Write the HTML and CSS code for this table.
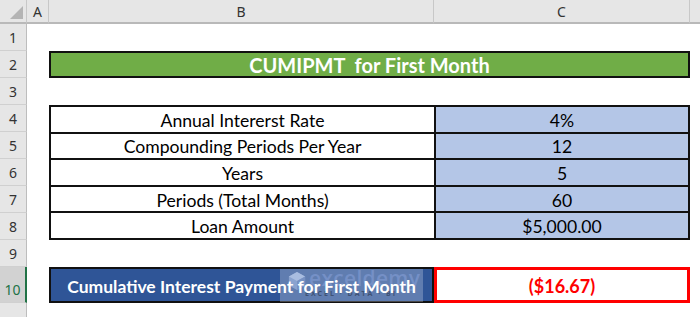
FILE: index.html
```html
<!DOCTYPE html>
<html>
<head>
<meta charset="utf-8">
<link rel="stylesheet" href="styles.css">
</head>
<body>
<div class="sheet">
  <div class="corner"><span class="tri"></span></div>
  <div class="colhead ch-a">A</div>
  <div class="colhead ch-b">B</div>
  <div class="colhead ch-c">C</div>
  <div class="colhead ch-x"></div>

  <div class="rowhead r1">1</div>
  <div class="rowhead r2">2</div>
  <div class="rowhead r3">3</div>
  <div class="rowhead r4">4</div>
  <div class="rowhead r5">5</div>
  <div class="rowhead r6">6</div>
  <div class="rowhead r7">7</div>
  <div class="rowhead r8">8</div>
  <div class="rowhead r9">9</div>
  <div class="rowhead r10 sel">10</div>
  <div class="rowhead r11"></div>

  <div class="title">CUMIPMT&nbsp; for First Month</div>

  <div class="data">
    <div class="lbl">Annual Interers​t Rate</div><div class="val">4%</div>
    <div class="lbl">Compounding Periods Per Year</div><div class="val">12</div>
    <div class="lbl">Years</div><div class="val">5</div>
    <div class="lbl">Periods (Total Months)</div><div class="val">60</div>
    <div class="lbl">Loan Amount</div><div class="val">$5,000.00</div>
  </div>

  <div class="result-lbl">
    <span class="txt">Cumulative Interest Payment for First Month</span>
    <div class="watermark">
      <svg class="wm-logo" viewBox="0 0 20 22" width="18" height="20">
        <polygon points="10,1 19,6 19,16 10,21 1,16 1,6" fill="#8aa3cf"/>
        <polygon points="10,1 19,6 10,11 1,6" fill="#a9bde0"/>
        <polygon points="10,11 19,6 19,16 10,21" fill="#7791c2"/>
      </svg>
      <div class="wm-text">
        <span class="wm-name">exceldemy</span>
        <span class="wm-sub">EXCEL · DATA · BI</span>
      </div>
    </div>
  </div>
  <div class="result-val">($16.67)</div>
</div>
</body>
</html>
```

FILE: styles.css
```css
html, body {
  margin: 0;
  padding: 0;
  background: #ffffff;
}
.sheet {
  width: 700px;
  height: 317px;
  display: grid;
  grid-template-columns: 27px 22px 385px 256px 1fr;
  grid-template-rows: 24px repeat(9, 27px) 36px 1fr;
  font-family: Lato, "Open Sans", sans-serif;
  overflow: hidden;
}
.corner {
  grid-column: 1;
  grid-row: 1;
  background: #e6e6e6;
  border-bottom: 2px solid #b9b9b9;
  border-right: 1px solid #c8c8c8;
  box-sizing: border-box;
  position: relative;
}
.tri {
  position: absolute;
  right: 3px;
  bottom: 3px;
  width: 0;
  height: 0;
  border-left: 13px solid transparent;
  border-bottom: 13px solid #b4b4b4;
}
.colhead {
  grid-row: 1;
  background: #e6e6e6;
  border-bottom: 2px solid #b9b9b9;
  border-right: 1px solid #c8c8c8;
  box-sizing: border-box;
  display: flex;
  align-items: center;
  justify-content: center;
  font-family: "Noto Sans", "Open Sans", sans-serif;
  font-size: 14px;
  color: #333;
  padding-top: 1px;
}
.ch-a { grid-column: 2; }
.ch-b { grid-column: 3; }
.ch-c { grid-column: 4; }
.ch-x { grid-column: 5; border-right: none; }

.rowhead {
  grid-column: 1;
  background: #e6e6e6;
  border-bottom: 1px solid #d0d0d0;
  border-right: 1px solid #bdbdbd;
  box-sizing: border-box;
  display: flex;
  align-items: flex-end;
  justify-content: center;
  padding-bottom: 3px;
  font-family: "Noto Sans", "Open Sans", sans-serif;
  font-size: 14px;
  color: #333;
}
.r1 { grid-row: 2; }
.r2 { grid-row: 3; }
.r3 { grid-row: 4; }
.r4 { grid-row: 5; }
.r5 { grid-row: 6; }
.r6 { grid-row: 7; }
.r7 { grid-row: 8; }
.r8 { grid-row: 9; }
.r9 { grid-row: 10; }
.r10 { grid-row: 11; }
.r11 { grid-row: 12; border-bottom: none; }
.rowhead.sel {
  background: #d2d2d2;
  color: #217346;
  border-right: 2px solid #217346;
}

.title {
  grid-column: 3 / 5;
  grid-row: 3;
  background: #70ad47;
  border: 2px solid #111;
  box-sizing: border-box;
  color: #ffffff;
  font-weight: bold;
  font-size: 20px;
  display: flex;
  align-items: center;
  justify-content: center;
  white-space: pre;
  padding-top: 1px;
}

.data {
  grid-column: 3 / 5;
  grid-row: 5 / 10;
  display: grid;
  grid-template-columns: 385px 1fr;
  grid-template-rows: repeat(5, 1fr);
  border-right: 2px solid #111;
  border-bottom: 2px solid #111;
  box-sizing: border-box;
  font-size: 17.6px;
  color: #000;
}
.lbl, .val {
  border-top: 2px solid #111;
  border-left: 2px solid #111;
  display: flex;
  align-items: center;
  justify-content: center;
  padding-top: 2px;
}
.val {
  background: #b4c6e7;
}

.result-lbl {
  grid-column: 3;
  grid-row: 11;
  background: #2f5597;
  border: 2px solid #111;
  box-sizing: border-box;
  color: #fff;
  font-weight: bold;
  font-size: 17.5px;
  display: flex;
  align-items: center;
  justify-content: center;
  position: relative;
  padding-top: 2px;
}
.result-lbl .txt {
  position: relative;
  z-index: 2;
}
.watermark {
  position: absolute;
  left: 229px;
  top: 0px;
  width: 143px;
  height: 33px;
  background: rgba(255, 255, 255, 0.24);
  display: flex;
  align-items: flex-start;
  gap: 3px;
  padding-left: 8px;
  padding-top: 2px;
  box-sizing: border-box;
  z-index: 1;
}
.wm-text {
  display: flex;
  flex-direction: column;
  line-height: 1;
}
.wm-name {
  font-family: "Open Sans", sans-serif;
  font-weight: 600;
  font-size: 21px;
  color: #7590c6;
  letter-spacing: 0.3px;
  margin-top: -3px;
}
.wm-sub {
  font-family: "Open Sans", sans-serif;
  font-size: 7px;
  color: #3f5275;
  letter-spacing: 2px;
  margin-left: -4px;
  margin-top: 1px;
}
.result-val {
  grid-column: 4;
  grid-row: 11;
  border: 3px solid #ff0000;
  box-sizing: border-box;
  color: #ff0000;
  font-weight: bold;
  font-size: 18px;
  display: flex;
  align-items: center;
  justify-content: center;
  padding-top: 2px;
}
```
